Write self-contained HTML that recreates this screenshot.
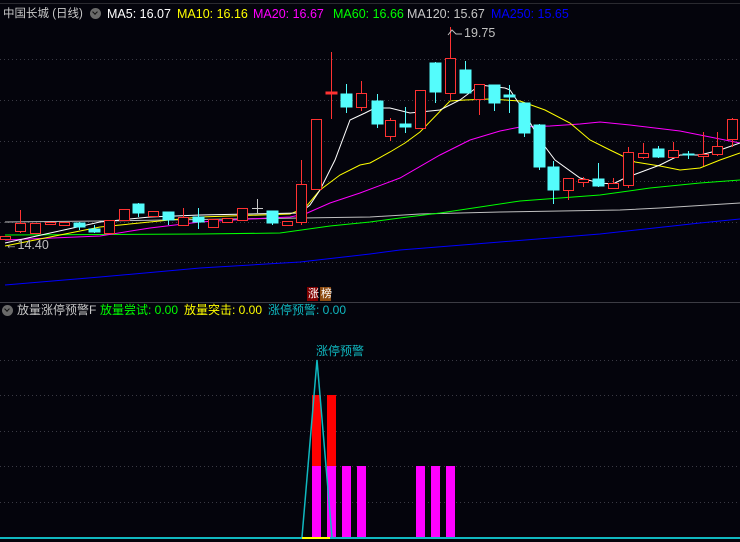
<!DOCTYPE html>
<html><head><meta charset="utf-8"><style>
html,body{margin:0;padding:0;background:#04040c;width:740px;height:542px;overflow:hidden;font-family:"Liberation Sans","Noto Sans CJK SC",sans-serif}
.t{position:absolute;font-size:12.5px;white-space:nowrap;line-height:14px}
.c{font-size:12px}
.ic{position:absolute;width:11px;height:11px;border-radius:50%;background:#6a6a6a}
.ic:after{content:"";position:absolute;left:3px;top:2px;width:3px;height:3px;border-right:1.5px solid #111;border-bottom:1.5px solid #111;transform:rotate(45deg)}
</style></head><body>
<svg width="740" height="542" style="position:absolute;left:0;top:0">
<g stroke="#3a3a44" stroke-dasharray="1,3" stroke-width="1">
<line x1="0" y1="59.5" x2="740" y2="59.5"/><line x1="0" y1="100.5" x2="740" y2="100.5"/><line x1="0" y1="141.5" x2="740" y2="141.5"/><line x1="0" y1="181.5" x2="740" y2="181.5"/><line x1="0" y1="222.5" x2="740" y2="222.5"/><line x1="0" y1="262.5" x2="740" y2="262.5"/>
<line x1="0" y1="360.5" x2="740" y2="360.5"/><line x1="0" y1="395.5" x2="740" y2="395.5"/><line x1="0" y1="431.5" x2="740" y2="431.5"/><line x1="0" y1="466.5" x2="740" y2="466.5"/><line x1="0" y1="502.5" x2="740" y2="502.5"/>
</g>
<line x1="0" y1="302.5" x2="740" y2="302.5" stroke="#3c3c44"/>
<line x1="0" y1="3.5" x2="740" y2="3.5" stroke="#2a2a30"/>
<g fill="none" stroke-width="1">
<polyline stroke="#0000ff" points="5,285 100,277 200,268 300,262 370,254 400,250 500,242 600,234 700,223 740,219"/>
<polyline stroke="#c0c0c0" points="5,222 100,221 300,218 370,217 420,214 500,212 560,211 620,210 660,208 740,203"/>
<polyline stroke="#00ff00" points="5,235 200,234 280,233 330,226 370,222 400,218 440,213 480,207 520,201 560,198 600,195 650,188 700,183 740,180"/>
<polyline stroke="#ff00ff" points="5,240 100,236 150,228 200,222 250,219 290,217 305,214 330,203 360,193 400,178 440,155 470,140 500,131 520,127 550,126 580,124 600,122 630,125 680,131 720,139 740,143"/>
<polyline stroke="#ffff00" points="5,246 100,227 200,217 290,214 305,208 320,190 340,175 360,165 370,163 390,152 405,143 420,132 450,101 465,100 490,99 520,101 545,110 570,123 590,140 610,150 635,162 660,166 680,170 700,168 720,160 740,153"/>
<polyline stroke="#ffffff" points="5,243 100,222 150,217 200,215 300,213 310,205 320,190 335,160 350,120 365,113 375,108 390,108 410,113 440,110 460,100 480,85 505,88 510,90 520,105 540,140 555,160 580,178 600,183 613,184 625,178 660,165 680,155 700,155 720,150 740,143"/>
</g>
<g stroke="#ff3232" fill="#04040c" stroke-width="1">
<rect x="0.5" y="236.5" width="10" height="3"/>
<line x1="20.5" y1="210" x2="20.5" y2="233"/><rect x="15.5" y="223.5" width="10" height="8"/>
<rect x="30.5" y="223.5" width="10" height="10"/>
<rect x="45.5" y="222.5" width="10" height="2"/>
<rect x="59.5" y="222.5" width="10" height="3"/>
<rect x="104.5" y="220.5" width="10" height="13"/>
<rect x="119.5" y="209.5" width="10" height="11"/>
<rect x="148.5" y="211.5" width="10" height="5"/>
<line x1="183.5" y1="208" x2="183.5" y2="225"/><rect x="178.5" y="217.5" width="10" height="8"/>
<rect x="208.5" y="219.5" width="10" height="8"/>
<rect x="222.5" y="218.5" width="10" height="4"/>
<rect x="237.5" y="208.5" width="10" height="12"/>
<rect x="282.5" y="221.5" width="10" height="4"/>
<line x1="301.5" y1="160" x2="301.5" y2="225"/><rect x="296.5" y="184.5" width="10" height="38"/>
<rect x="311.5" y="119.5" width="10" height="70"/>
<line x1="331.5" y1="52" x2="331.5" y2="119"/><rect x="326" y="92" width="11" height="2" fill="#ff3232"/>
<line x1="361.5" y1="81" x2="361.5" y2="111"/><rect x="356.5" y="93.5" width="10" height="14"/>
<line x1="390.5" y1="118" x2="390.5" y2="141"/><rect x="385.5" y="120.5" width="10" height="16"/>
<rect x="415.5" y="90.5" width="10" height="38"/>
<line x1="450.5" y1="27" x2="450.5" y2="100"/><rect x="445.5" y="58.5" width="10" height="35"/>
<line x1="479.5" y1="84" x2="479.5" y2="115"/><rect x="474.5" y="84.5" width="10" height="15"/>
<line x1="568.5" y1="178" x2="568.5" y2="200"/><rect x="563.5" y="178.5" width="10" height="12"/>
<line x1="583.5" y1="177" x2="583.5" y2="187"/><rect x="578.5" y="179.5" width="10" height="3"/>
<line x1="613.5" y1="178" x2="613.5" y2="188"/><rect x="608.5" y="183.5" width="10" height="5"/>
<line x1="628.5" y1="147" x2="628.5" y2="188"/><rect x="623.5" y="152.5" width="10" height="33"/>
<line x1="643.5" y1="143" x2="643.5" y2="159"/><rect x="638.5" y="153.5" width="10" height="4"/>
<line x1="673.5" y1="142" x2="673.5" y2="158"/><rect x="668.5" y="150.5" width="10" height="7"/>
<line x1="703.5" y1="132" x2="703.5" y2="166"/><rect x="698.5" y="154.5" width="10" height="2"/>
<line x1="717.5" y1="132" x2="717.5" y2="156"/><rect x="712.5" y="146.5" width="10" height="8"/>
<line x1="732.5" y1="118" x2="732.5" y2="147"/><rect x="727.5" y="119.5" width="10" height="20"/>
</g>
<g stroke="#54fcfc" fill="#54fcfc" stroke-width="1">
<line x1="79.5" y1="222" x2="79.5" y2="230"/><rect x="74" y="223" width="11" height="4"/>
<line x1="94.5" y1="225" x2="94.5" y2="233"/><rect x="89" y="229" width="11" height="3"/>
<line x1="138.5" y1="203" x2="138.5" y2="217"/><rect x="133" y="204" width="11" height="9"/>
<line x1="168.5" y1="212" x2="168.5" y2="225"/><rect x="163" y="212" width="11" height="8"/>
<line x1="198.5" y1="208" x2="198.5" y2="229"/><rect x="193" y="217" width="11" height="5"/>
<line x1="272.5" y1="211" x2="272.5" y2="225"/><rect x="267" y="211" width="11" height="12"/>
<line x1="346.5" y1="84" x2="346.5" y2="113"/><rect x="341" y="94" width="11" height="13"/>
<line x1="377.5" y1="94" x2="377.5" y2="128"/><rect x="372" y="101" width="11" height="23"/>
<line x1="405.5" y1="107" x2="405.5" y2="133"/><rect x="400" y="124" width="11" height="3"/>
<line x1="435.5" y1="62" x2="435.5" y2="103"/><rect x="430" y="63" width="11" height="29"/>
<line x1="465.5" y1="61" x2="465.5" y2="93"/><rect x="460" y="70" width="11" height="23"/>
<line x1="494.5" y1="85" x2="494.5" y2="111"/><rect x="489" y="85" width="11" height="18"/>
<line x1="509.5" y1="85" x2="509.5" y2="113"/><rect x="504" y="95" width="11" height="2"/>
<line x1="524.5" y1="103" x2="524.5" y2="137"/><rect x="519" y="103" width="11" height="30"/>
<line x1="539.5" y1="124" x2="539.5" y2="170"/><rect x="534" y="125" width="11" height="42"/>
<line x1="553.5" y1="161" x2="553.5" y2="204"/><rect x="548" y="167" width="11" height="23"/>
<line x1="598.5" y1="163" x2="598.5" y2="187"/><rect x="593" y="179" width="11" height="7"/>
<line x1="658.5" y1="146" x2="658.5" y2="158"/><rect x="653" y="149" width="11" height="8"/>
<line x1="688.5" y1="151" x2="688.5" y2="159"/><rect x="683" y="154" width="11" height="1"/>
</g>
<g stroke="#c8c8c8"><line x1="257.5" y1="199" x2="257.5" y2="213"/><line x1="252" y1="208.5" x2="263" y2="208.5"/></g>
<rect x="312" y="395" width="9" height="71" fill="#ff0000"/>
<rect x="327" y="395" width="9" height="71" fill="#ff0000"/>
<g fill="#ff00ff">
<rect x="312" y="466" width="9" height="71"/><rect x="327" y="466" width="9" height="71"/><rect x="342" y="466" width="9" height="71"/><rect x="357" y="466" width="9" height="71"/>
<rect x="416" y="466" width="9" height="71"/><rect x="431" y="466" width="9" height="71"/><rect x="446" y="466" width="9" height="71"/>
</g>
<polyline fill="none" stroke="#10b8c0" stroke-width="1.5" points="302,537 317,360 332,537"/>
<line x1="0" y1="538" x2="740" y2="538" stroke="#10b8c0" stroke-width="2"/>
<line x1="302" y1="538" x2="330" y2="538" stroke="#ffff00" stroke-width="2"/>
<polyline fill="none" stroke="#c0c0c0" points="448,35 452,30 456,34 462,34"/>
<rect x="307" y="287" width="11" height="14" fill="#800000"/>
<rect x="320" y="287" width="11" height="14" fill="#8b4a10"/>
</svg>
<div class="t c" style="left:3px;top:7px;color:#c8c8c8;font-size:11.5px">中国长城 (日线)</div>
<div class="ic" style="left:90px;top:8px"></div>
<div class="t" style="left:107px;top:7px;color:#fff">MA5: 16.07</div>
<div class="t" style="left:177px;top:7px;color:#ffff00">MA10: 16.16</div>
<div class="t" style="left:253px;top:7px;color:#ff00ff">MA20: 16.67</div>
<div class="t" style="left:333px;top:7px;color:#00ff00">MA60: 16.66</div>
<div class="t" style="left:407px;top:7px;color:#c8c8c8">MA120: 15.67</div>
<div class="t" style="left:491px;top:7px;color:#0000ff">MA250: 15.65</div>
<div class="t" style="left:464px;top:26px;color:#c0c0c0">19.75</div>
<div class="t" style="left:5px;top:238px;color:#c0c0c0">←14.40</div>
<div class="t" style="left:308px;top:287px;color:#fff;font-size:11px">涨</div>
<div class="t" style="left:321px;top:287px;color:#fff;font-size:11px">榜</div>
<div class="ic" style="left:2px;top:305px"></div>
<div class="t c" style="left:17px;top:303px;color:#c8c8c8">放量涨停预警F</div>
<div class="t c" style="left:100px;top:303px;color:#00ff00">放量尝试: 0.00</div>
<div class="t c" style="left:184px;top:303px;color:#ffff00">放量突击: 0.00</div>
<div class="t c" style="left:268px;top:303px;color:#10b8c0">涨停预警: 0.00</div>
<div class="t c" style="left:316px;top:344px;color:#10b8c0">涨停预警</div>
</body></html>
